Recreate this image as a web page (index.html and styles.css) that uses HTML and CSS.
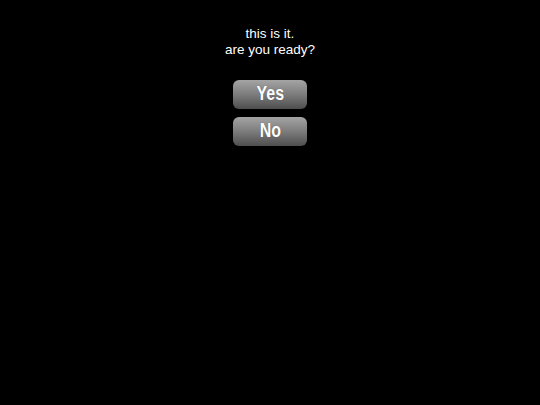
FILE: index.html
```html
<!DOCTYPE html>
<html>
<head>
<meta charset="utf-8">
<link rel="stylesheet" href="styles.css">
</head>
<body>
<main class="dialog">
  <p class="prompt">this is it.<br>are you ready?</p>
  <div class="actions">
    <button class="btn"><span class="btn-label">Yes</span></button>
    <button class="btn"><span class="btn-label">No</span></button>
  </div>
</main>
</body>
</html>
```
FILE: styles.css
```css
html, body {
  margin: 0;
  padding: 0;
  background: #000;
  width: 540px;
  height: 405px;
  overflow: hidden;
}
.dialog {
  display: flex;
  flex-direction: column;
  align-items: center;
  padding-top: 26px;
}
.prompt {
  margin: 0;
  color: #fff;
  font-family: "Liberation Sans", Arial, sans-serif;
  font-size: 13.5px;
  line-height: 16px;
  text-align: center;
}
.actions {
  display: flex;
  flex-direction: column;
  gap: 8px;
  margin-top: 22px;
}
.btn {
  display: flex;
  align-items: center;
  justify-content: center;
  width: 74px;
  height: 29px;
  padding: 0;
  border: none;
  border-radius: 6px;
  background: linear-gradient(to bottom, #a4a4a4 0%, #7c7c7c 50%, #4e4e4e 100%);
}
.btn-label {
  display: inline-block;
  color: #fff;
  font-family: "Liberation Sans", Arial, sans-serif;
  font-weight: bold;
  font-size: 20px;
  line-height: 27px;
  margin-bottom: 2px;
  transform: scaleX(0.8);
  text-shadow: 0 0 1px rgba(0,0,0,0.4);
}
```
